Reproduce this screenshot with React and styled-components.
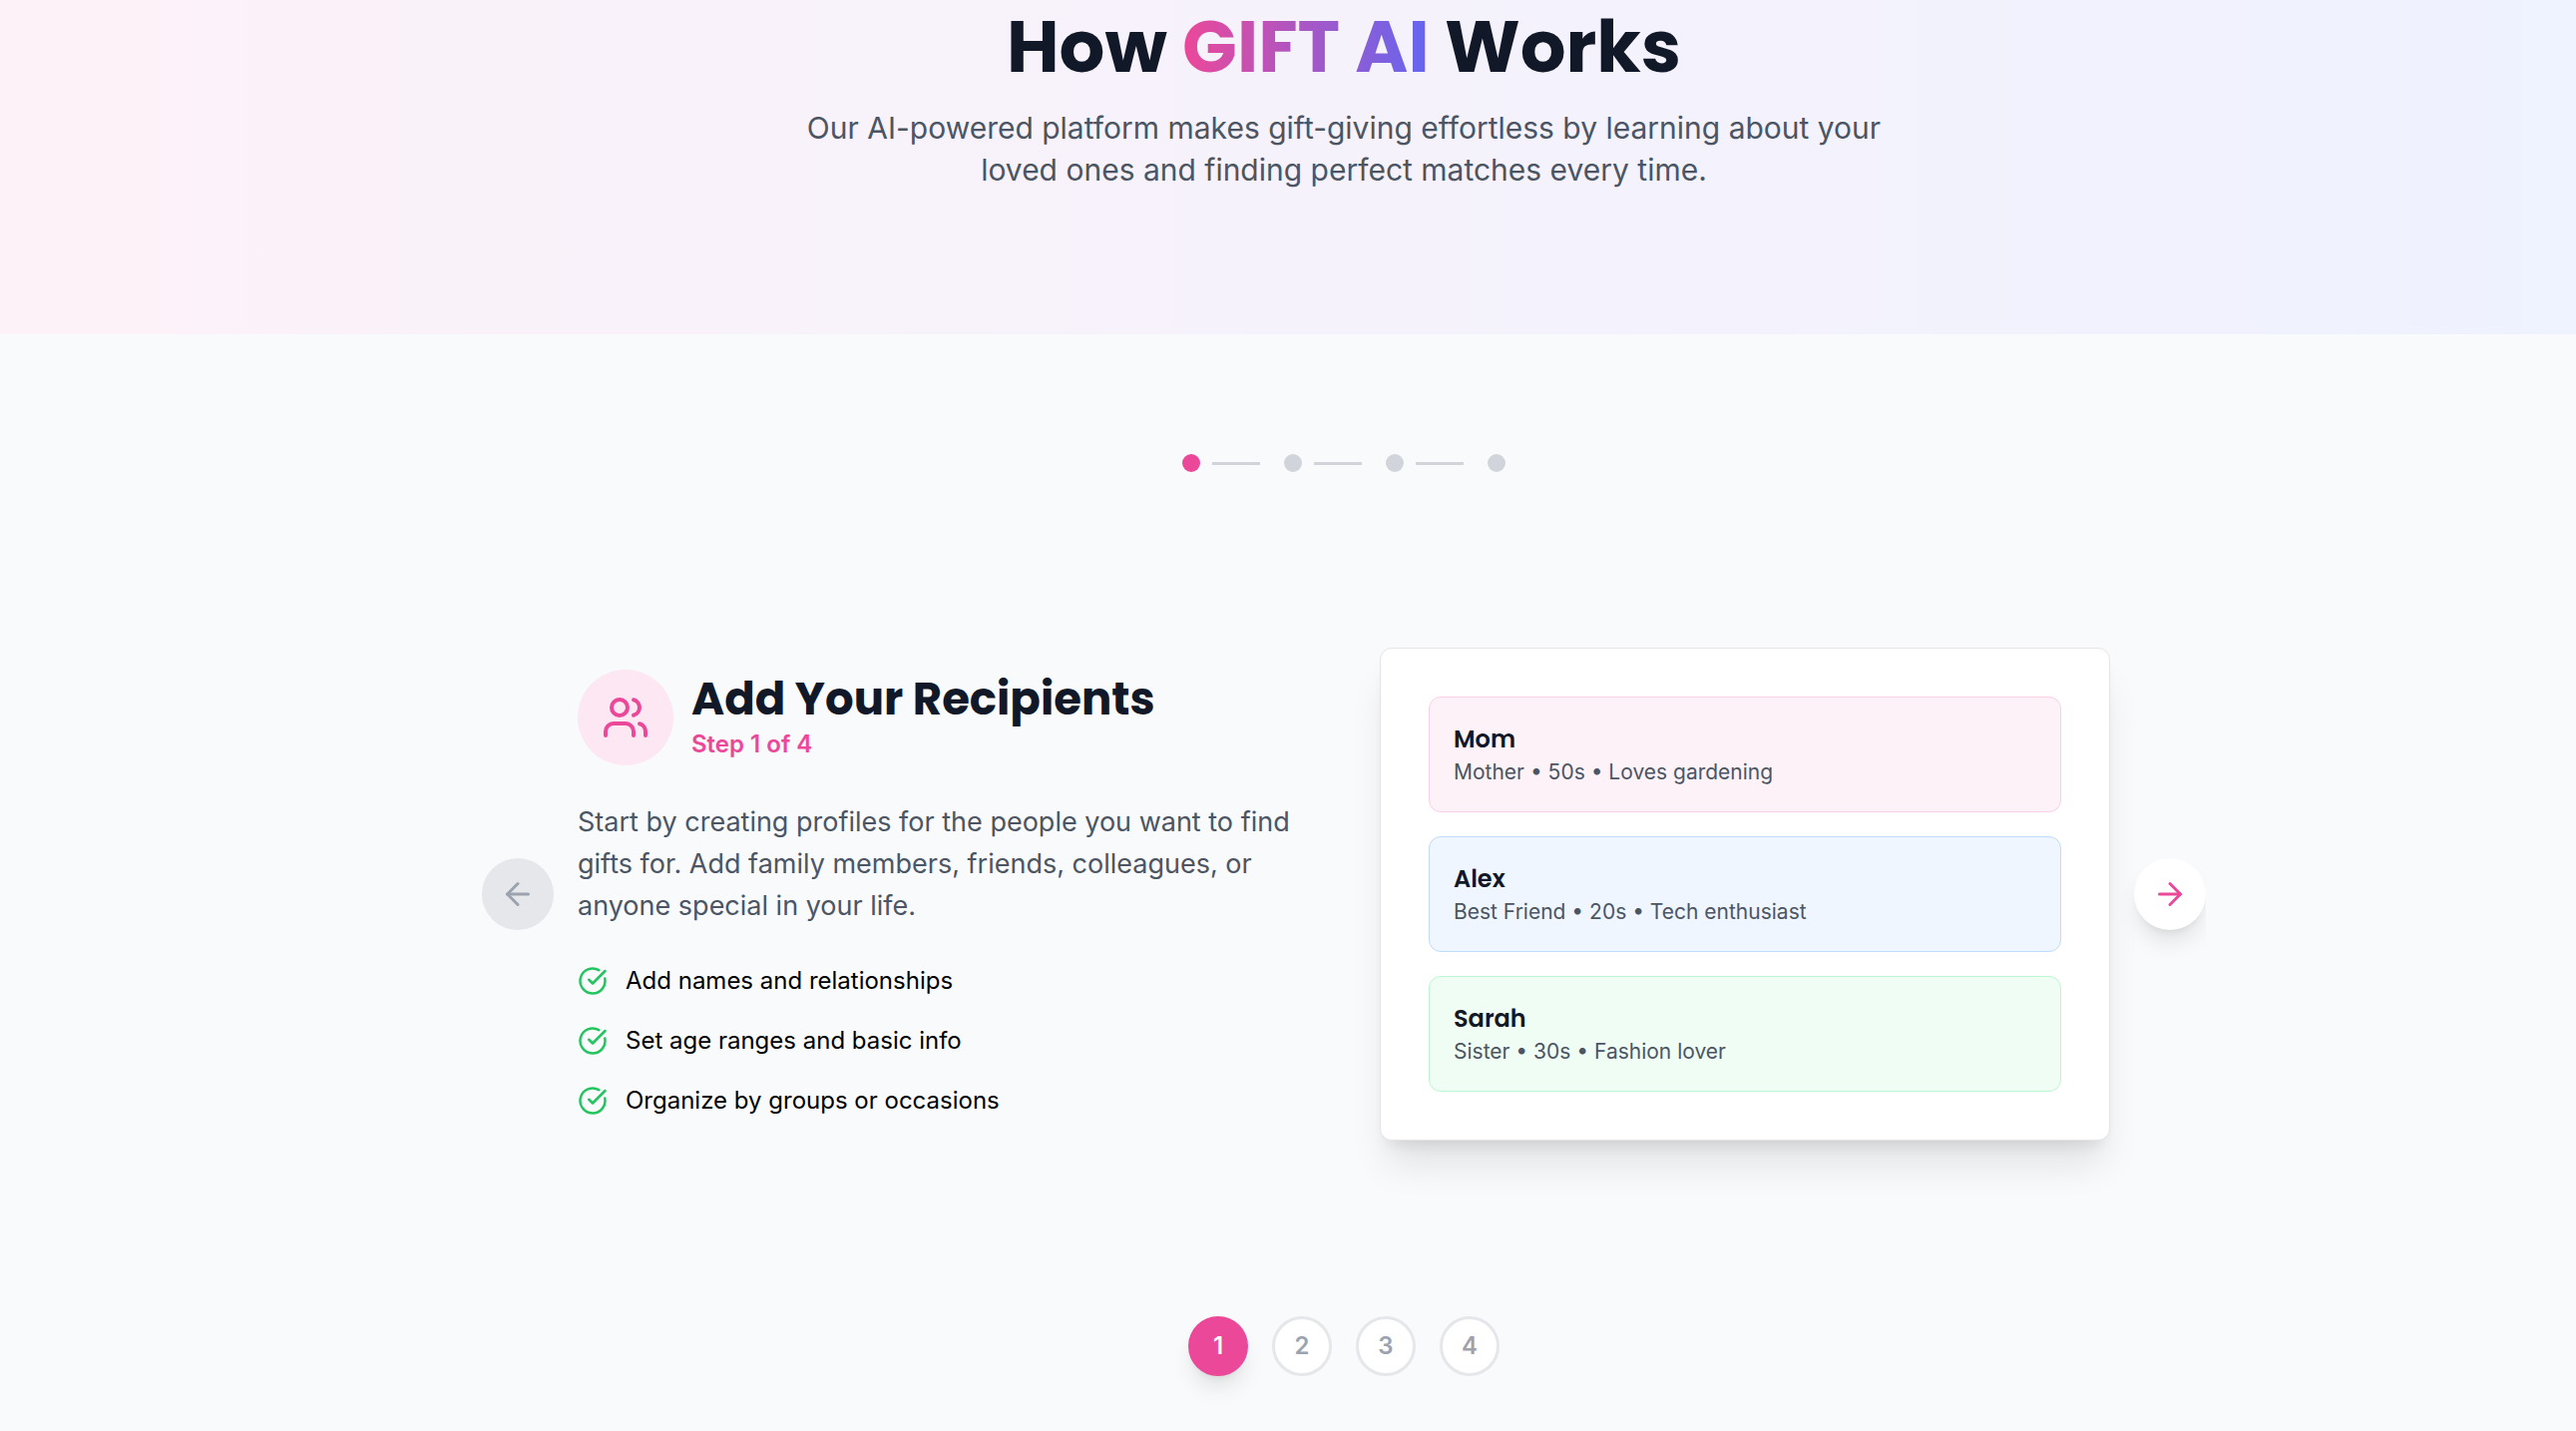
import React, { useState } from "react";
import styled, { createGlobalStyle, css } from "styled-components";
import { ArrowLeft, ArrowRight, CircleCheckBig, Users } from "lucide-react";

const GlobalStyle = createGlobalStyle`
  *, *::before, *::after { box-sizing: border-box; }
  body {
    margin: 0;
    background: #f9fafb;
    color: #000;
    font-family: Inter, "Liberation Sans", sans-serif;
    font-size: 24px;
    line-height: 36px;
  }
  h1, h2, h3, p, ul, ol { margin: 0; padding: 0; }
  ul, ol { list-style: none; }
  button { font: inherit; padding: 0; cursor: pointer; }
`;

const heading = css`
  font-family: Poppins, Inter, sans-serif;
  color: #111827;
`;

const Page = styled.main`
  min-height: 100vh;
  background: #f9fafb;
`;

const Hero = styled.header`
  padding: 11px 0 144px 112px;
  background: linear-gradient(to right, #fdf2f8, #eef2ff calc(100% + 112px));
  text-align: center;
`;

const HeroTitle = styled.h1`
  ${heading}
  font-size: 72px;
  font-weight: 700;
  line-height: 72px;
  margin-bottom: 24px;
`;

const Brand = styled.span`
  background: linear-gradient(to right, #ec4899, #6366f1);
  background-clip: text;
  color: transparent;
`;

const HeroText = styled.p`
  max-width: 1152px;
  margin: 0 auto;
  font-size: 30px;
  line-height: 42px;
  color: #4b5563;
`;

const Steps = styled.section`
  padding: 120px 0 55px 112px;
`;

const Progress = styled.ol`
  display: flex;
  justify-content: center;
  gap: 24px;
  margin-bottom: 96px;
`;

const ProgressItem = styled.li`
  display: flex;
  align-items: center;
  gap: 12px;
`;

const Dot = styled.span`
  width: 18px;
  height: 18px;
  border-radius: 50%;
  background: ${(p) => (p.$active ? "#ec4899" : "#d1d5db")};
`;

const Line = styled.span`
  width: 48px;
  height: 3px;
  background: ${(p) => (p.$done ? "#ec4899" : "#d1d5db")};
`;

const Carousel = styled.div`
  display: flex;
  align-items: center;
  gap: 24px;
  max-width: 1728px;
  margin: 0 auto 96px;
  padding: 80px 0;
  overflow: hidden;
`;

const ArrowButton = styled.button`
  display: flex;
  align-items: center;
  justify-content: center;
  flex: none;
  width: 72px;
  height: 72px;
  border: 0;
  border-radius: 50%;
  background: #fff;
  color: #ec4899;
  box-shadow: 0 15px 22px -4px rgba(0, 0, 0, 0.1), 0 6px 9px -6px rgba(0, 0, 0, 0.1);

  &:disabled {
    background: #e5e7eb;
    color: #9ca3af;
    box-shadow: none;
    cursor: not-allowed;
  }
`;

const Slide = styled.div`
  flex: 1;
  display: grid;
  grid-template-columns: 1fr 1fr;
  align-items: center;
  gap: 72px;
`;

const Details = styled.div`
  display: flex;
  flex-direction: column;
  gap: 36px;
`;

const StepHeader = styled.div`
  display: flex;
  align-items: center;
  gap: 18px;
`;

const IconCircle = styled.div`
  display: flex;
  align-items: center;
  justify-content: center;
  width: 96px;
  height: 96px;
  border-radius: 50%;
  background: #fce7f3;
  color: #ec4899;
`;

const StepTitle = styled.h2`
  ${heading}
  font-size: 45px;
  font-weight: 700;
  line-height: 54px;
`;

const StepCount = styled.p`
  color: #ec4899;
  font-weight: 600;
`;

const Description = styled.p`
  font-size: 27px;
  line-height: 42px;
  color: #4b5563;
`;

const FeatureList = styled.ul`
  display: grid;
  gap: 24px;
`;

const Feature = styled.li`
  display: flex;
  align-items: center;
  gap: 18px;

  svg { color: #22c55e; }
`;

const Card = styled.div`
  display: grid;
  gap: 24px;
  padding: 48px;
  border: 1px solid #e7e5e4;
  border-radius: 12px;
  background: #fff;
  box-shadow: 0 30px 38px -8px rgba(0, 0, 0, 0.1), 0 12px 15px -9px rgba(0, 0, 0, 0.1);
`;

const tones = {
  pink: { fill: "#fdf2f8", line: "#fbcfe8" },
  blue: { fill: "#eff6ff", line: "#bfdbfe" },
  green: { fill: "#f0fdf4", line: "#bbf7d0" },
};

const Recipient = styled.article`
  padding: 24px;
  border: 1px solid ${(p) => tones[p.$tone].line};
  border-radius: 12px;
  background: ${(p) => tones[p.$tone].fill};
`;

const RecipientName = styled.h3`
  ${heading}
  font-size: 24px;
  font-weight: 600;
  line-height: 36px;
`;

const RecipientInfo = styled.p`
  font-size: 21px;
  line-height: 30px;
  color: #4b5563;
`;

const Pager = styled.nav`
  display: flex;
  justify-content: center;
  gap: 24px;
`;

const PageButton = styled.button`
  width: 60px;
  height: 60px;
  border: 3px solid #e5e7eb;
  border-radius: 50%;
  background: #fff;
  color: #9ca3af;
  font-weight: 600;

  ${(p) =>
    p.$active &&
    css`
      border-color: #ec4899;
      background: #ec4899;
      color: #fff;
      box-shadow: 0 15px 22px -4px rgba(0, 0, 0, 0.1), 0 6px 9px -6px rgba(0, 0, 0, 0.1);
    `}
`;

const steps = [1, 2, 3, 4];
const features = [
  "Add names and relationships",
  "Set age ranges and basic info",
  "Organize by groups or occasions",
];
const recipients = [
  { name: "Mom", info: "Mother • 50s • Loves gardening", tone: "pink" },
  { name: "Alex", info: "Best Friend • 20s • Tech enthusiast", tone: "blue" },
  { name: "Sarah", info: "Sister • 30s • Fashion lover", tone: "green" },
];

export default function App() {
  const [step, setStep] = useState(1);

  return (
    <Page>
      <GlobalStyle />
      <Hero>
        <HeroTitle>
          How <Brand>GIFT AI</Brand> Works
        </HeroTitle>
        <HeroText>
          Our AI-powered platform makes gift-giving effortless by learning about your loved ones
          and finding perfect matches every time.
        </HeroText>
      </Hero>
      <Steps>
        <Progress>
          {steps.map((n) => (
            <ProgressItem key={n}>
              <Dot $active={n <= step} />
              {n < steps.length && <Line $done={n < step} />}
            </ProgressItem>
          ))}
        </Progress>
        <Carousel>
          <ArrowButton aria-label="Previous step" disabled={step === 1} onClick={() => setStep(step - 1)}>
            <ArrowLeft size={36} />
          </ArrowButton>
          <Slide>
            <Details>
              <StepHeader>
                <IconCircle>
                  <Users size={48} />
                </IconCircle>
                <div>
                  <StepTitle>Add Your Recipients</StepTitle>
                  <StepCount>Step {step} of 4</StepCount>
                </div>
              </StepHeader>
              <Description>
                Start by creating profiles for the people you want to find gifts for. Add family
                members, friends, colleagues, or anyone special in your life.
              </Description>
              <FeatureList>
                {features.map((text) => (
                  <Feature key={text}>
                    <CircleCheckBig size={30} />
                    {text}
                  </Feature>
                ))}
              </FeatureList>
            </Details>
            <Card>
              {recipients.map((r) => (
                <Recipient key={r.name} $tone={r.tone}>
                  <RecipientName>{r.name}</RecipientName>
                  <RecipientInfo>{r.info}</RecipientInfo>
                </Recipient>
              ))}
            </Card>
          </Slide>
          <ArrowButton aria-label="Next step" disabled={step === 4} onClick={() => setStep(step + 1)}>
            <ArrowRight size={36} />
          </ArrowButton>
        </Carousel>
        <Pager aria-label="Steps">
          {steps.map((n) => (
            <PageButton key={n} $active={n === step} onClick={() => setStep(n)}>
              {n}
            </PageButton>
          ))}
        </Pager>
      </Steps>
    </Page>
  );
}
